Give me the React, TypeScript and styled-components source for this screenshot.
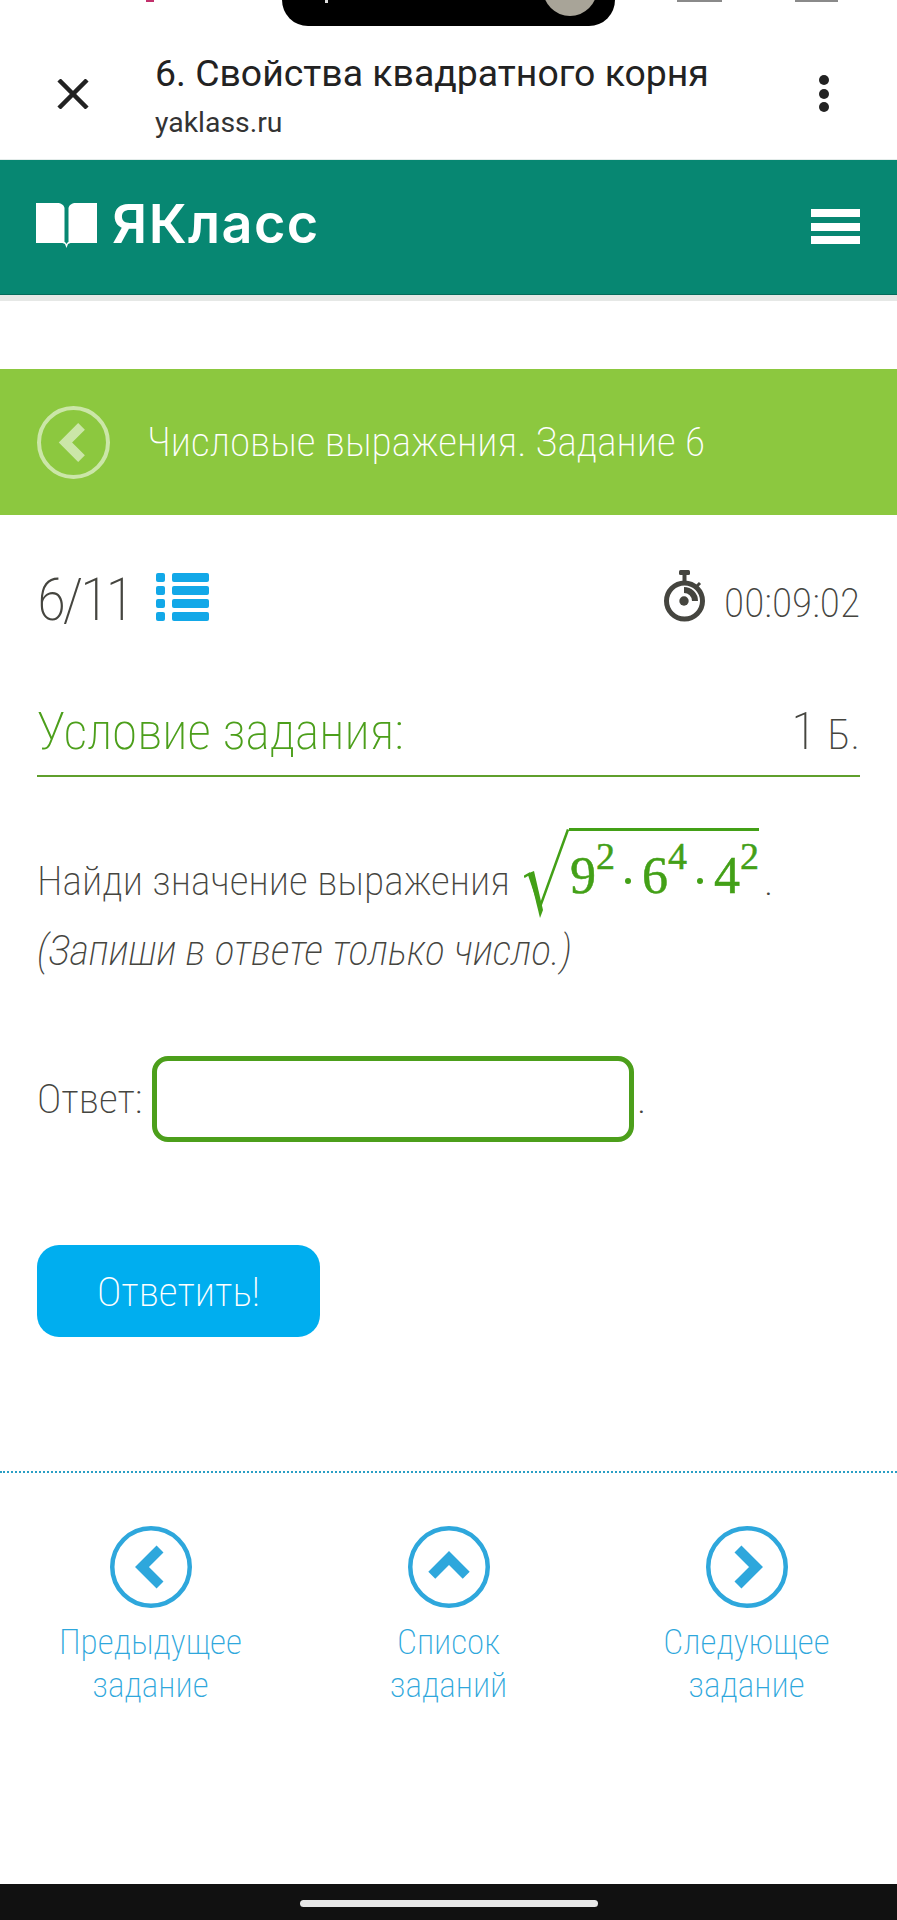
import styled, { createGlobalStyle } from "styled-components";

const green = "#4c9f1b";
const mathGreen = "#43a017";
const blue = "#2ea7dc";
const grey = "#45453f";

const GlobalStyle = createGlobalStyle`
  html, body {
    margin: 0;
    padding: 0;
    background: #fff;
  }
  body {
    font-family: Roboto, "Liberation Sans", sans-serif;
    font-stretch: 75%;
    font-weight: 200;
    color: ${grey};
  }
  * {
    box-sizing: border-box;
  }
`;

const Page = styled.div`
  width: 897px;
  height: 1920px;
  display: flex;
  flex-direction: column;
  overflow: hidden;
`;

const StatusBar = styled.div`
  height: 27px;
  padding-left: 146px;
  display: flex;
  align-items: flex-start;
`;

const RedMark = styled.span`
  width: 8px;
  height: 2px;
  margin-right: 128px;
  background: #c2306b;
`;

const GreyMark = styled.span<{ $gap: number; $width: number }>`
  width: ${(p) => p.$width}px;
  height: 2px;
  margin-left: ${(p) => p.$gap}px;
  background: #8a8a8a;
`;

const Island = styled.div`
  position: relative;
  width: 333px;
  height: 26px;
  background: #000;
  border-radius: 0 0 32px 32px;
  overflow: hidden;
`;

const IslandTick = styled.span`
  position: absolute;
  left: 43px;
  top: 0;
  width: 3px;
  height: 3px;
  background: #ddd;
`;

const Avatar = styled.div`
  position: absolute;
  right: 18px;
  top: -38px;
  width: 54px;
  height: 54px;
  border-radius: 50%;
  background: #a8a498;
`;

const ChromeBar = styled.header`
  height: 133px;
  display: flex;
  align-items: flex-start;
  font-stretch: 100%;
  font-weight: 400;
  border-bottom: 1px solid #e3ecea;
`;

const CloseButton = styled.button`
  width: 155px;
  padding: 52px 0 0 57px;
  background: none;
  border: 0;
  text-align: left;
  svg {
    display: block;
  }
`;

const PageInfo = styled.div`
  flex: 1;
  padding-top: 24px;
`;

const PageTitle = styled.div`
  font-size: 37.4px;
  line-height: 44px;
  color: #222;
`;

const PageHost = styled.div`
  margin-top: 11px;
  font-size: 28.4px;
  line-height: 34px;
  color: #333;
`;

const DotsButton = styled.div`
  width: 78px;
  padding-top: 48px;
  display: flex;
  flex-direction: column;
  gap: 3.5px;
`;

const Dot = styled.span`
  width: 10px;
  height: 10px;
  border-radius: 50%;
  background: #222;
`;

const SiteHeader = styled.div`
  height: 135px;
  padding: 43px 37px 0 36px;
  display: flex;
  justify-content: space-between;
  align-items: flex-start;
  background: #078772;
  border-bottom: 1px solid #056b5b;
`;

const Logo = styled.div`
  display: flex;
  gap: 15px;
  color: #fff;
  svg {
    display: block;
  }
`;

const LogoText = styled.span`
  font-family: Inter, sans-serif;
  font-stretch: 100%;
  font-weight: 600;
  font-size: 54px;
  line-height: 41px;
  letter-spacing: 1.4px;
`;

const Burger = styled.div`
  width: 49px;
  margin-top: 6px;
  display: flex;
  flex-direction: column;
  gap: 5.5px;
`;

const BurgerBar = styled.span`
  height: 8px;
  background: #fff;
`;

const HeaderShadow = styled.div`
  height: 6px;
  background: #e6e8e6;
`;

const Banner = styled.div`
  margin-top: 68px;
  height: 146px;
  padding-left: 37px;
  display: flex;
  align-items: center;
  gap: 37px;
  background: #8cc83f;
  color: #fff;
  font-size: 41.4px;
  svg {
    display: block;
  }
`;

const Content = styled.main`
  padding: 0 37px;
  flex: 1;
`;

const ProgressRow = styled.div`
  margin-top: 58px;
  height: 50px;
  display: flex;
  justify-content: space-between;
  align-items: flex-end;
`;

const Counter = styled.div`
  display: flex;
  align-items: flex-start;
  gap: 25px;
  margin-bottom: -3px;
  font-size: 60px;
  line-height: 53px;
  letter-spacing: -3.5px;
  svg {
    display: block;
  }
`;

const Timer = styled.div`
  display: flex;
  align-items: flex-end;
  gap: 16px;
  font-size: 41.5px;
  line-height: 40px;
  svg {
    display: block;
  }
`;

const TaskHead = styled.div`
  margin-top: 80px;
  padding-bottom: 11px;
  display: flex;
  justify-content: space-between;
  align-items: baseline;
  border-bottom: 2px solid #5f9f2c;
`;

const TaskTitle = styled.h2`
  margin: 0;
  font-size: 51.6px;
  line-height: 58px;
  font-weight: 200;
  color: ${green};
`;

const Points = styled.div`
  font-size: 52px;
  line-height: 58px;
  small {
    font-size: 42px;
    margin-left: 11px;
  }
`;

const Question = styled.p`
  margin: 53px 0 0;
  font-size: 41.5px;
  line-height: 70px;
  i {
    font-size: 42px;
  }
`;

const MathBlock = styled.span`
  display: inline-flex;
  align-items: flex-start;
  height: 91px;
  margin: -2px 5px -24px 14px;
  vertical-align: -24px;
  font-family: "Liberation Serif", serif;
  font-weight: 400;
  font-stretch: 100%;
  color: ${mathGreen};
  -webkit-text-stroke: 0.5px ${mathGreen};
  svg {
    display: block;
  }
`;

const Radicand = styled.span`
  display: inline-flex;
  align-items: flex-start;
  height: 70px;
  padding: 18px 0 0 1px;
  border-top: 3px solid ${mathGreen};
`;

const Digit = styled.span`
  font-size: 52px;
  line-height: 54px;
`;

const Power = styled.sup`
  font-size: 38px;
  line-height: 38px;
  vertical-align: baseline;
  margin-top: -12px;
`;

const MulDot = styled.span`
  width: 6px;
  height: 6px;
  margin: 29px 11px 0 10px;
  border-radius: 50%;
  background: ${mathGreen};
`;

const AnswerRow = styled.div`
  margin-top: 70px;
  display: flex;
  align-items: flex-end;
  font-size: 41.5px;
  line-height: 50px;
`;

const AnswerLabel = styled.span`
  width: 115px;
  padding-bottom: 18px;
`;

const AnswerInput = styled.input`
  width: 482px;
  height: 86px;
  border: 5px solid ${green};
  border-radius: 16px;
  background: #fff;
  outline: none;
`;

const AnswerEnd = styled.span`
  padding: 0 0 18px 3px;
`;

const SubmitButton = styled.button`
  display: block;
  margin-top: 103px;
  width: 283px;
  height: 92px;
  border: 0;
  border-radius: 22px;
  background: #00aeef;
  color: #fff;
  font-family: inherit;
  font-stretch: inherit;
  font-weight: 200;
  font-size: 41.5px;
`;

const BottomNav = styled.nav`
  margin: 134px -37px 0;
  padding-top: 53px;
  border-top: 2px dotted #2a9fc4;
  display: grid;
  grid-template-columns: repeat(3, 298px);
  justify-content: center;
`;

const NavItem = styled.a`
  display: flex;
  flex-direction: column;
  align-items: center;
  text-align: center;
  color: ${blue};
  font-size: 35.2px;
  line-height: 43px;
  font-weight: 200;
  svg {
    display: block;
    margin-bottom: 13px;
  }
`;

const GestureBar = styled.div`
  height: 36px;
  padding-top: 16px;
  display: flex;
  justify-content: center;
  background: #111;
`;

const GesturePill = styled.span`
  width: 298px;
  height: 7px;
  border-radius: 4px;
  background: #e8e8e8;
`;

const BookIcon = () => (
  <svg width="61" height="45" viewBox="0 0 61 45" fill="#fff">
    <path d="M0 0h21c4 0 7 2 7.500 5v35H0z" />
    <path d="M61 0H40c-4 0-7 2-7.500 5v35H61z" />
    <path d="M24 39h5l1.500 2 1.500-2h5l-5 2-1.500 4-1.500-4z" />
  </svg>
);

const StopwatchIcon = () => (
  <svg width="46" height="54" viewBox="0 0 46 54" fill={grey}>
    <rect x="17" y="1" width="11" height="5" rx="1.500" />
    <rect x="20.500" y="6" width="4" height="7" />
    <path d="M35 17l3-3" stroke={grey} strokeWidth="3" />
    <circle cx="22.500" cy="32" r="18" fill="none" stroke={grey} strokeWidth="5" />
    <circle cx="22" cy="32" r="4.700" />
    <path d="M22 18A14 14 0 0 1 36 32H30A8 8 0 0 0 22 24z" />
  </svg>
);

const ListIcon = () => (
  <svg width="53" height="48" viewBox="0 0 53 48" fill="#12a8e8">
    {[0, 13, 26, 39].map((y) => (
      <g key={y}>
        <rect x="0" y={y} width="9" height="9" rx="2" />
        <rect x="16" y={y} width="37" height="9" rx="2" />
      </g>
    ))}
  </svg>
);

const RadicalIcon = () => (
  <svg width="45" height="91" viewBox="0 0 45 91">
    <path d="M0 49l5-3 11 33L44 1.500" fill="none" stroke={mathGreen} strokeWidth="2.500" />
    <path d="M5 45l11 45 3-8L10 43z" fill={mathGreen} />
  </svg>
);

const chevrons = {
  left: "61,28 39,50 61,72",
  right: "39,28 61,50 39,72",
  up: "29,60 50,39 71,60",
};

const CircleChevron = ({ dir, size, color, width }: { dir: keyof typeof chevrons; size: number; color: string; width: number }) => (
  <svg width={size} height={size} viewBox="0 0 100 100">
    <circle cx="50" cy="50" r="47.250" fill="none" stroke={color} strokeWidth="5.500" />
    <polyline points={chevrons[dir]} fill="none" stroke={color} strokeWidth={width} />
  </svg>
);

const App = () => (
  <Page>
    <GlobalStyle />
    <StatusBar>
      <RedMark />
      <Island>
        <IslandTick />
        <Avatar />
      </Island>
      <GreyMark $gap={62} $width={45} />
      <GreyMark $gap={73} $width={43} />
    </StatusBar>
    <ChromeBar>
      <CloseButton>
        <svg width="32" height="30" viewBox="0 0 32 30">
          <path d="M2 1l28 28M30 1L2 29" stroke="#222" strokeWidth="4.500" fill="none" />
        </svg>
      </CloseButton>
      <PageInfo>
        <PageTitle>6. Свойства квадратного корня</PageTitle>
        <PageHost>yaklass.ru</PageHost>
      </PageInfo>
      <DotsButton>
        <Dot />
        <Dot />
        <Dot />
      </DotsButton>
    </ChromeBar>
    <SiteHeader>
      <Logo>
        <BookIcon />
        <LogoText>ЯКласс</LogoText>
      </Logo>
      <Burger>
        <BurgerBar />
        <BurgerBar />
        <BurgerBar />
      </Burger>
    </SiteHeader>
    <HeaderShadow />
    <Banner>
      <CircleChevron dir="left" size={73} color="rgba(255,255,255,.55)" width={13} />
      Числовые выражения. Задание 6
    </Banner>
    <Content>
      <ProgressRow>
        <Counter>
          6/11
          <ListIcon />
        </Counter>
        <Timer>
          <StopwatchIcon />
          00:09:02
        </Timer>
      </ProgressRow>
      <TaskHead>
        <TaskTitle>Условие задания:</TaskTitle>
        <Points>
          1<small>Б.</small>
        </Points>
      </TaskHead>
      <Question>
        Найди значение выражения
        <MathBlock>
          <RadicalIcon />
          <Radicand>
            <Digit>9</Digit>
            <Power>2</Power>
            <MulDot />
            <Digit>6</Digit>
            <Power>4</Power>
            <MulDot />
            <Digit>4</Digit>
            <Power>2</Power>
          </Radicand>
        </MathBlock>
        .
        <br />
        <i>(Запиши в ответе только число.)</i>
      </Question>
      <AnswerRow>
        <AnswerLabel>Ответ:</AnswerLabel>
        <AnswerInput />
        <AnswerEnd>.</AnswerEnd>
      </AnswerRow>
      <SubmitButton>Ответить!</SubmitButton>
      <BottomNav>
        <NavItem>
          <CircleChevron dir="left" size={82} color={blue} width={12} />
          <span>
            Предыдущее
            <br />
            задание
          </span>
        </NavItem>
        <NavItem>
          <CircleChevron dir="up" size={82} color={blue} width={12} />
          <span>
            Список
            <br />
            заданий
          </span>
        </NavItem>
        <NavItem>
          <CircleChevron dir="right" size={82} color={blue} width={12} />
          <span>
            Следующее
            <br />
            задание
          </span>
        </NavItem>
      </BottomNav>
    </Content>
    <GestureBar>
      <GesturePill />
    </GestureBar>
  </Page>
);

export default App;
